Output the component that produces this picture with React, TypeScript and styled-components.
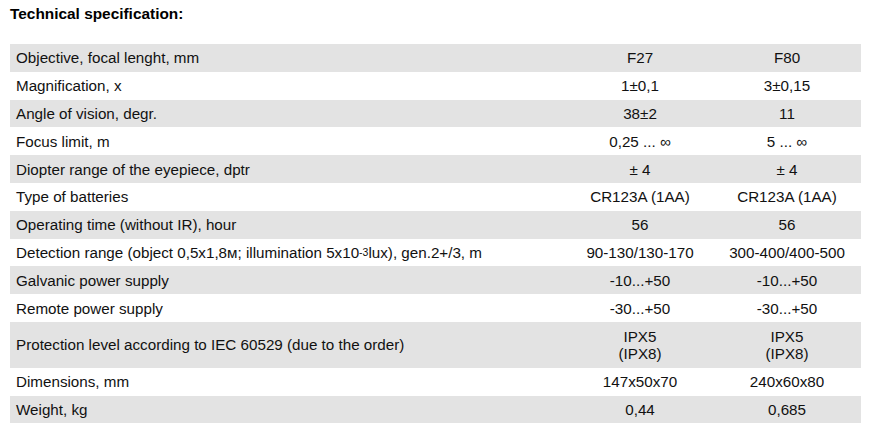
import React from "react";
import styled, { createGlobalStyle } from "styled-components";

const Global = createGlobalStyle`
  html, body { margin: 0; padding: 0; background: #ffffff; }
  body { font-family: "Liberation Sans", Arial, sans-serif; color: #111111; }
`;

const Page = styled.div`
  padding: 5px 10px 0 10px;
  width: 851px;
`;

const Title = styled.h2`
  margin: 0;
  font-size: 15.4px;
  font-weight: bold;
  line-height: 18px;
  color: #000;
`;

const Table = styled.div`
  margin-top: 21px;
  display: grid;
  grid-template-columns: 557px 146px 148px;
  width: 851px;
`;

const Row = styled.div<{ $shade: boolean; $tall?: boolean }>`
  display: contents;
  & > div {
    background: ${(p) => (p.$shade ? "#e3e3e3" : "#ffffff")};
    height: ${(p) => (p.$tall ? "45.8px" : "27.8px")};
  }
`;

const Label = styled.div`
  display: flex;
  align-items: center;
  padding-left: 6px;
  font-size: 15.2px;
  line-height: 17px;
  white-space: nowrap;
  sup {
    font-size: 10.5px;
    line-height: 0;
    vertical-align: 7px;
  }
`;

const Value = styled.div`
  display: flex;
  align-items: center;
  justify-content: center;
  text-align: center;
  font-size: 15.2px;
  line-height: 17px;
  white-space: nowrap;
`;

type R = { label: React.ReactNode; a: React.ReactNode; b: React.ReactNode; tall?: boolean };

const rows: R[] = [
  { label: "Objective, focal lenght, mm", a: "F27", b: "F80" },
  { label: "Magnification, x", a: "1±0,1", b: "3±0,15" },
  { label: "Angle of vision, degr.", a: "38±2", b: "11" },
  { label: "Focus limit, m", a: "0,25 ... ∞", b: "5 ... ∞" },
  { label: "Diopter range of the eyepiece, dptr", a: "± 4", b: "± 4" },
  { label: "Type of batteries", a: "CR123A (1AA)", b: "CR123A (1AA)" },
  { label: "Operating time (without IR), hour", a: "56", b: "56" },
  {
    label: (
      <>
        Detection range (object 0,5x1,8м; illumination 5x10<sup>-3</sup>lux), gen.2+/3, m
      </>
    ),
    a: "90-130/130-170",
    b: "300-400/400-500",
  },
  { label: "Galvanic power supply", a: "-10...+50", b: "-10...+50" },
  { label: "Remote power supply", a: "-30...+50", b: "-30...+50" },
  {
    label: "Protection level according to IEC 60529 (due to the order)",
    a: (
      <>
        IPX5
        <br />
        (IPX8)
      </>
    ),
    b: (
      <>
        IPX5
        <br />
        (IPX8)
      </>
    ),
    tall: true,
  },
  { label: "Dimensions, mm", a: "147x50x70", b: "240x60x80" },
  { label: "Weight, kg", a: "0,44", b: "0,685" },
];

export default function App() {
  return (
    <>
      <Global />
      <Page>
        <Title>Technical specification:</Title>
        <Table>
          {rows.map((r, i) => (
            <Row key={i} $shade={i % 2 === 0} $tall={r.tall}>
              <Label>{r.label}</Label>
              <Value>{r.a}</Value>
              <Value>{r.b}</Value>
            </Row>
          ))}
        </Table>
      </Page>
    </>
  );
}
